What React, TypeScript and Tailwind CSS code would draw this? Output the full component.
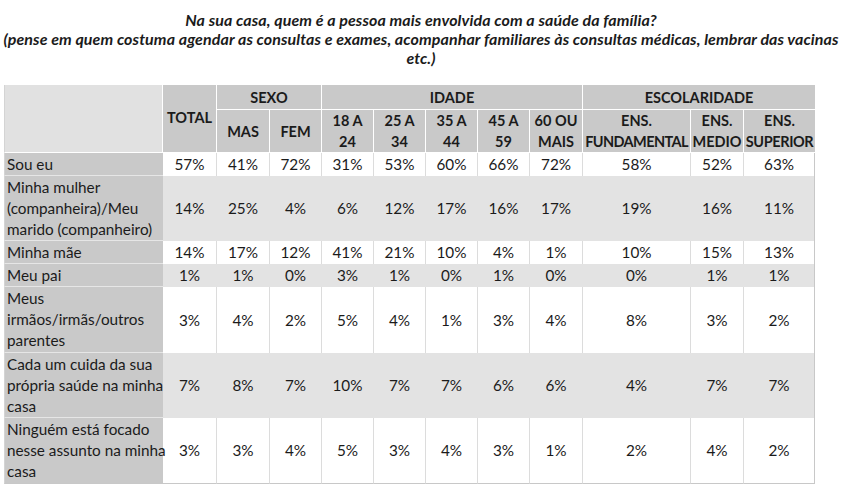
import React from "react"

type Row = { label: React.ReactNode; h: string; values: string[] }

const rows: Row[] = [
  { label: "Sou eu", h: "h-[23px]", values: ["57%", "41%", "72%", "31%", "53%", "60%", "66%", "72%", "58%", "52%", "63%"] },
  {
    label: (
      <>
        Minha mulher
        <br />
        (companheira)/Meu
        <br />
        marido (companheiro)
      </>
    ),
    h: "h-[65px]",
    values: ["14%", "25%", "4%", "6%", "12%", "17%", "16%", "17%", "19%", "16%", "11%"],
  },
  { label: "Minha mãe", h: "h-[23px]", values: ["14%", "17%", "12%", "41%", "21%", "10%", "4%", "1%", "10%", "15%", "13%"] },
  { label: "Meu pai", h: "h-[23px]", values: ["1%", "1%", "0%", "3%", "1%", "0%", "1%", "0%", "0%", "1%", "1%"] },
  {
    label: (
      <>
        Meus
        <br />
        irmãos/irmãs/outros
        <br />
        parentes
      </>
    ),
    h: "h-[66px]",
    values: ["3%", "4%", "2%", "5%", "4%", "1%", "3%", "4%", "8%", "3%", "2%"],
  },
  {
    label: (
      <>
        Cada um cuida da sua
        <br />
        própria saúde na minha
        <br />
        casa
      </>
    ),
    h: "h-[65px]",
    values: ["7%", "8%", "7%", "10%", "7%", "7%", "6%", "6%", "4%", "7%", "7%"],
  },
  {
    label: (
      <>
        Ninguém está focado
        <br />
        nesse assunto na minha
        <br />
        casa
      </>
    ),
    h: "h-[66px]",
    values: ["3%", "3%", "4%", "5%", "3%", "4%", "3%", "1%", "2%", "4%", "2%"],
  },
]

const widths = ["w-[159px]", "w-[54px]", "w-[53px]", "w-[52px]", "w-[52px]", "w-[52px]", "w-[52px]", "w-[52px]", "w-[53px]", "w-[108px]", "w-[53px]", "w-[71px]"]

const subHeaders: React.ReactNode[] = [
  "MAS",
  "FEM",
  <>18 A<br />24</>,
  <>25 A<br />34</>,
  <>35 A<br />44</>,
  <>45 A<br />59</>,
  <>60 OU<br />MAIS</>,
  <>ENS.<br /><span className="tracking-[-0.6px]">FUNDAMENTAL</span></>,
  <>ENS.<br />MEDIO</>,
  <>ENS.<br /><span className="tracking-[-0.4px]">SUPERIOR</span></>,
]

export default function App() {
  const th = "bg-[#c9c9c9] border-r border-b border-white text-center font-bold p-0 align-middle text-[14.5px]"
  return (
    <div className="w-[848px] h-[496px] bg-white text-[#1b1b1b] font-['Lato','Open_Sans',sans-serif] text-[15.3px]">
      {/* Title */}
      <div className="pt-[10px] pr-[6px] text-center font-bold italic leading-[19px] text-[16px] tracking-[0.1px] whitespace-nowrap">
        <div>Na sua casa, quem é a pessoa mais envolvida com a saúde da família?</div>
        <div>
          (pense em quem costuma agendar as consultas e exames, acompanhar familiares às consultas médicas, lembrar das vacinas
        </div>
        <div>etc.)</div>
      </div>

      {/* Table */}
      <table className="ml-[4px] mt-[18px] table-fixed border-separate border-spacing-0 w-[811px] leading-[21px]">
        <colgroup>
          {widths.map((w, i) => (
            <col key={i} className={w} />
          ))}
        </colgroup>
        <thead>
          <tr className="h-[25px]">
            <th rowSpan={2} className="bg-[#e1e1e1] border-l border-l-[#d4d4d4] border-r border-b border-white p-0" />
            <th rowSpan={2} className={th}>
              <span className="relative top-[-1px]">TOTAL</span>
            </th>
            <th colSpan={2} className={th}>SEXO</th>
            <th colSpan={5} className={th}>IDADE</th>
            <th colSpan={3} className={th + " border-r-0"}>ESCOLARIDADE</th>
          </tr>
          <tr className="h-[43px]">
            {subHeaders.map((s, i) => (
              <th key={i} className={th + (i === subHeaders.length - 1 ? " border-r-0" : "") + " whitespace-nowrap"}>
                {s}
              </th>
            ))}
          </tr>
        </thead>
        <tbody>
          {rows.map((r, ri) => {
            const gray = ri % 2 === 1
            const last = ri === rows.length - 1
            return (
              <tr key={ri} className={r.h}>
                <td
                  className={
                    "bg-[#c9c9c9] border-l border-l-[#d4d4d4] px-[2px] py-0 align-middle whitespace-nowrap " +
                    (last ? "border-b border-b-[#c8c8c8]" : "border-b border-b-[#e6e6e6]")
                  }
                >
                  {r.label}
                </td>
                {r.values.map((v, vi) => {
                  const lastCol = vi === r.values.length - 1
                  return (
                    <td
                      key={vi}
                      className={
                        "text-center align-middle p-0 border-r " +
                        (gray ? "bg-[#e3e3e3] " : "bg-white ") +
                        (lastCol ? "border-r-[#c8c8c8] " : gray ? "border-r-[#e3e3e3] " : "border-r-[#dcdcdc] ") +
                        (last ? "border-b border-b-[#c8c8c8]" : "")
                      }
                    >
                      {v}
                    </td>
                  )
                })}
              </tr>
            )
          })}
        </tbody>
      </table>
    </div>
  )
}
